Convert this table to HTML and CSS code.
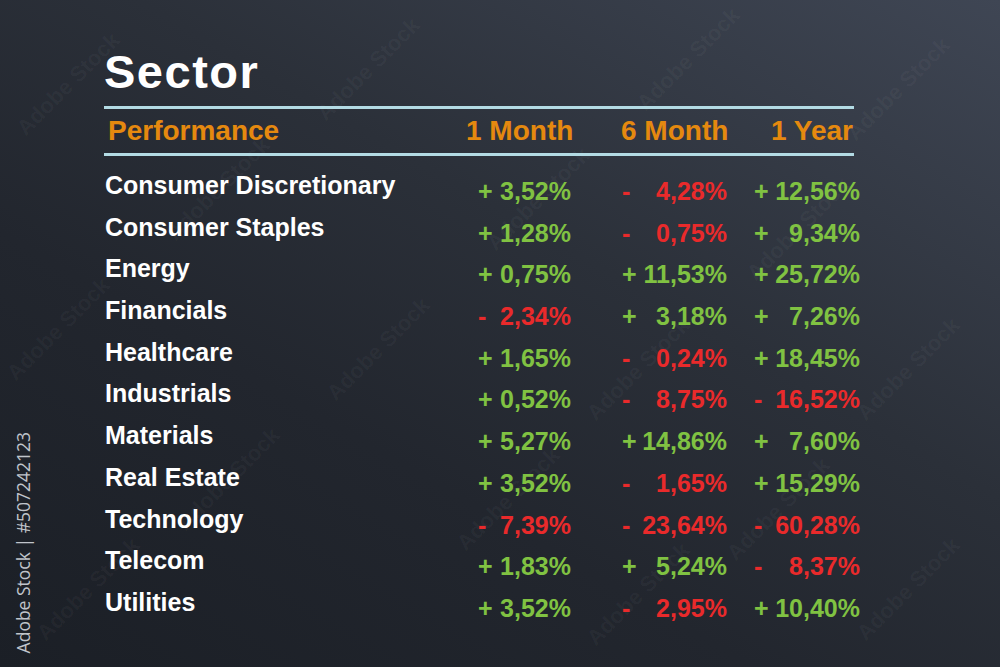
FILE: index.html
```html
<!DOCTYPE html>
<html lang="en">
<head>
<meta charset="utf-8">
<title>Sector Performance</title>
<link rel="stylesheet" href="styles.css">
</head>
<body>
<div class="page">
  <div class="watermarks" aria-hidden="true">
    <span class="wm" style="left:30px;top:115px">Adobe Stock</span>
    <span class="wm" style="left:330px;top:100px">Adobe Stock</span>
    <span class="wm" style="left:650px;top:90px">Adobe Stock</span>
    <span class="wm" style="left:860px;top:120px">Adobe Stock</span>
    <span class="wm" style="left:180px;top:220px">Adobe Stock</span>
    <span class="wm" style="left:500px;top:230px">Adobe Stock</span>
    <span class="wm" style="left:760px;top:260px">Adobe Stock</span>
    <span class="wm" style="left:20px;top:360px">Adobe Stock</span>
    <span class="wm" style="left:340px;top:380px">Adobe Stock</span>
    <span class="wm" style="left:600px;top:400px">Adobe Stock</span>
    <span class="wm" style="left:870px;top:400px">Adobe Stock</span>
    <span class="wm" style="left:190px;top:510px">Adobe Stock</span>
    <span class="wm" style="left:470px;top:530px">Adobe Stock</span>
    <span class="wm" style="left:740px;top:540px">Adobe Stock</span>
    <span class="wm" style="left:50px;top:620px">Adobe Stock</span>
    <span class="wm" style="left:600px;top:625px">Adobe Stock</span>
    <span class="wm" style="left:870px;top:620px">Adobe Stock</span>
  </div>

  <main class="board">
    <h1 class="title">Sector</h1>
    <div class="head">
      <span class="h-name">Performance</span>
      <span class="h h1">1 Month</span>
      <span class="h h2">6 Month</span>
      <span class="h h3">1 Year</span>
    </div>
    <div class="rows">
      <div class="row"><span class="name">Consumer Discretionary</span>
        <span class="val c1 up"><b>+</b><i>3,52%</i></span>
        <span class="val c2 down"><b>-</b><i>4,28%</i></span>
        <span class="val c3 up"><b>+</b><i>12,56%</i></span></div>
      <div class="row"><span class="name">Consumer Staples</span>
        <span class="val c1 up"><b>+</b><i>1,28%</i></span>
        <span class="val c2 down"><b>-</b><i>0,75%</i></span>
        <span class="val c3 up"><b>+</b><i>9,34%</i></span></div>
      <div class="row"><span class="name">Energy</span>
        <span class="val c1 up"><b>+</b><i>0,75%</i></span>
        <span class="val c2 up"><b>+</b><i>11,53%</i></span>
        <span class="val c3 up"><b>+</b><i>25,72%</i></span></div>
      <div class="row"><span class="name">Financials</span>
        <span class="val c1 down"><b>-</b><i>2,34%</i></span>
        <span class="val c2 up"><b>+</b><i>3,18%</i></span>
        <span class="val c3 up"><b>+</b><i>7,26%</i></span></div>
      <div class="row"><span class="name">Healthcare</span>
        <span class="val c1 up"><b>+</b><i>1,65%</i></span>
        <span class="val c2 down"><b>-</b><i>0,24%</i></span>
        <span class="val c3 up"><b>+</b><i>18,45%</i></span></div>
      <div class="row"><span class="name">Industrials</span>
        <span class="val c1 up"><b>+</b><i>0,52%</i></span>
        <span class="val c2 down"><b>-</b><i>8,75%</i></span>
        <span class="val c3 down"><b>-</b><i>16,52%</i></span></div>
      <div class="row"><span class="name">Materials</span>
        <span class="val c1 up"><b>+</b><i>5,27%</i></span>
        <span class="val c2 up"><b>+</b><i>14,86%</i></span>
        <span class="val c3 up"><b>+</b><i>7,60%</i></span></div>
      <div class="row"><span class="name">Real Estate</span>
        <span class="val c1 up"><b>+</b><i>3,52%</i></span>
        <span class="val c2 down"><b>-</b><i>1,65%</i></span>
        <span class="val c3 up"><b>+</b><i>15,29%</i></span></div>
      <div class="row"><span class="name">Technology</span>
        <span class="val c1 down"><b>-</b><i>7,39%</i></span>
        <span class="val c2 down"><b>-</b><i>23,64%</i></span>
        <span class="val c3 down"><b>-</b><i>60,28%</i></span></div>
      <div class="row"><span class="name">Telecom</span>
        <span class="val c1 up"><b>+</b><i>1,83%</i></span>
        <span class="val c2 up"><b>+</b><i>5,24%</i></span>
        <span class="val c3 down"><b>-</b><i>8,37%</i></span></div>
      <div class="row"><span class="name">Utilities</span>
        <span class="val c1 up"><b>+</b><i>3,52%</i></span>
        <span class="val c2 down"><b>-</b><i>2,95%</i></span>
        <span class="val c3 up"><b>+</b><i>10,40%</i></span></div>
    </div>
  </main>

  <div class="stock-id">Adobe Stock | #507242123</div>
</div>
</body>
</html>
```

FILE: styles.css
```css
* { box-sizing: border-box; }

html, body {
  margin: 0;
  padding: 0;
}

body {
  width: 1000px;
  height: 667px;
  overflow: hidden;
  font-family: "Liberation Sans", Arial, sans-serif;
  background: linear-gradient(30deg, #1b1f26 0%, #22262e 35%, #2b3039 60%, #3f4654 100%);
}

.page {
  position: relative;
  width: 1000px;
  height: 667px;
}

.watermarks {
  position: absolute;
  inset: 0;
  overflow: hidden;
  pointer-events: none;
}

.wm {
  position: absolute;
  font-family: "Liberation Sans", Arial, sans-serif;
  font-weight: bold;
  font-size: 22px;
  line-height: 26px;
  color: rgba(255, 255, 255, 0.045);
  white-space: nowrap;
  transform: rotate(-45deg);
  transform-origin: left bottom;
}

.board {
  position: relative;
  padding: 48px 0 0 104px;
}

.title {
  margin: 0 0 11px 0;
  font-size: 47px;
  line-height: 47px;
  letter-spacing: 1.5px;
  font-weight: bold;
  color: #ffffff;
}

.head {
  display: flex;
  width: 750px;
  border-top: 3px solid #b3dbe4;
  border-bottom: 3px solid #b3dbe4;
  padding: 8px 0 8px 0;
  font-size: 28px;
  line-height: 28px;
  font-weight: bold;
  color: #e5890f;
  white-space: nowrap;
}

.h-name {
  width: 362px;
  padding-left: 4px;
}

.h { text-align: right; }
.h1 { width: 105px; }
.h2 { width: 105px; margin-left: 50px; }
.h3 { width: 84px; margin-left: 43px; }

.rows {
  padding-top: 9px;
}

.row {
  display: flex;
  align-items: flex-start;
  height: 41.7px;
  white-space: nowrap;
  font-weight: bold;
  font-size: 25px;
  line-height: 25px;
}

.name {
  width: 374px;
  padding-top: 8px;
  padding-left: 1px;
  color: #ffffff;
}

.val {
  display: flex;
  justify-content: space-between;
  padding-top: 14px;
}

.val b, .val i {
  font-weight: bold;
  font-style: normal;
}

.c1 { width: 93px; margin-right: 51px; }
.c2 { width: 105px; margin-right: 27px; }
.c3 { width: 106px; }

.up { color: #80c242; }
.down { color: #e92a2b; }

.stock-id {
  position: absolute;
  left: 13px;
  bottom: 14px;
  writing-mode: vertical-rl;
  transform: rotate(180deg);
  font-family: "Open Sans", "Liberation Sans", sans-serif;
  font-size: 17.5px;
  line-height: 20px;
  color: #c0c4ca;
  white-space: nowrap;
}
```
